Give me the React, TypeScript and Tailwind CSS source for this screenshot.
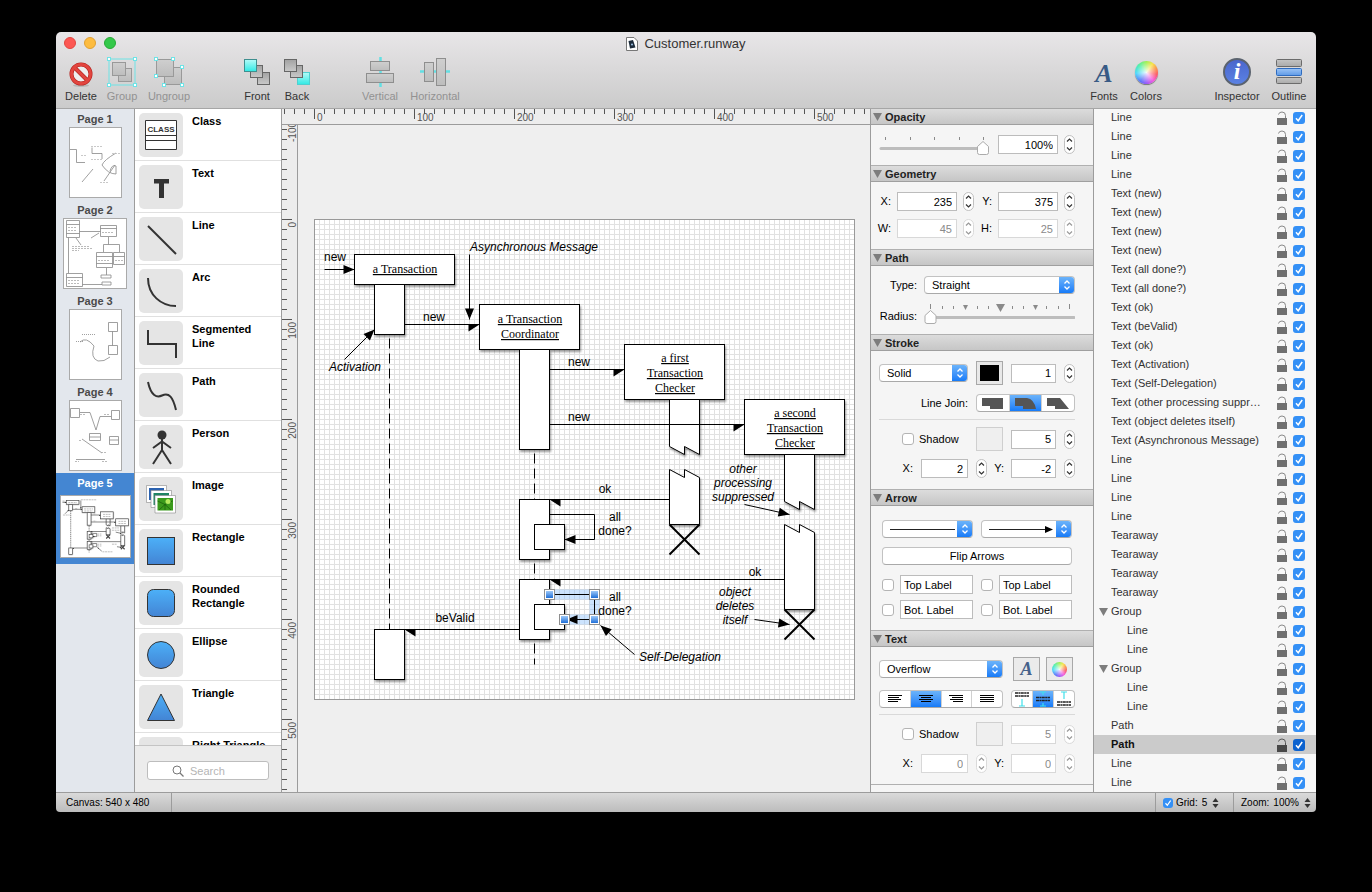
import type { ReactNode } from "react";
import clsx from "clsx";

/* ---------- diagram ---------- */

type Pt = { x: number; y: number };

function Arrow({ from, to, half }: { from: Pt; to: Pt; half?: boolean }) {
  const angle = (Math.atan2(to.y - from.y, to.x - from.x) * 180) / Math.PI;
  const side = to.x < from.x ? -7 : 7;
  return (
    <>
      <path d={`M${from.x} ${from.y}L${to.x} ${to.y}`} />
      <path
        d={half ? `M0 0H-11V${side}Z` : "M0 0L-11 -4.5V4.5Z"}
        fill="black"
        stroke="none"
        transform={`translate(${to.x} ${to.y}) rotate(${angle})`}
      />
    </>
  );
}

const boxes = [
  { x: 60, y: 65, w: 30, h: 50 },
  { x: 40, y: 35, w: 100, h: 30 },
  { x: 205, y: 130, w: 30, h: 100 },
  { x: 165, y: 85, w: 100, h: 45 },
  { x: 205, y: 280, w: 30, h: 60 },
  { x: 220, y: 305, w: 30, h: 25 },
  { x: 205, y: 360, w: 30, h: 60 },
  { x: 220, y: 385, w: 30, h: 25 },
  { x: 60, y: 410, w: 30, h: 50 },
  { x: 310, y: 125, w: 100, h: 55 },
  { x: 430, y: 180, w: 100, h: 55 },
];

const tearaways = [
  "M355 180V227L370 235V227L385 235V180Z",
  "M355 305V250L370 258V250L385 258V305Z",
  "M470 235V282L485 290V282L500 290V235Z",
  "M470 390V305L485 313V305L500 313V390Z",
];

const crosses = "M355 305L385 335M385 305L355 335M470 390L500 420M500 390L470 420";

type Label = { x: number; y: number; lines: string[]; kind?: "italic" | "serif" };

const diagramText: Label[] = [
  { x: 20, y: 42, lines: ["new"] },
  { x: 219, y: 32, lines: ["Asynchronous Message"], kind: "italic" },
  { x: 119, y: 102, lines: ["new"] },
  { x: 264, y: 147, lines: ["new"] },
  { x: 264, y: 202, lines: ["new"] },
  { x: 40, y: 152, lines: ["Activation"], kind: "italic" },
  { x: 290, y: 274, lines: ["ok"] },
  { x: 440, y: 357, lines: ["ok"] },
  { x: 300, y: 302, lines: ["all", "done?"] },
  { x: 300, y: 382, lines: ["all", "done?"] },
  { x: 140, y: 403, lines: ["beValid"] },
  { x: 428, y: 254, lines: ["other", "processing", "suppressed"], kind: "italic" },
  { x: 420, y: 377, lines: ["object", "deletes", "itself"], kind: "italic" },
  { x: 365, y: 442, lines: ["Self-Delegation"], kind: "italic" },
  { x: 90, y: 54, lines: ["a Transaction"], kind: "serif" },
  { x: 215, y: 104, lines: ["a Transaction", "Coordinator"], kind: "serif" },
  { x: 360, y: 143, lines: ["a first", "Transaction", "Checker"], kind: "serif" },
  { x: 480, y: 198, lines: ["a second", "Transaction", "Checker"], kind: "serif" },
];

function DiagramShapes() {
  return (
    <>
      <g strokeDasharray="10 5">
        <path d="M75 119V410" />
        <path d="M220 234V280M220 344V360M220 424V445" />
      </g>
      <g fill="white" filter="url(#drop)">
        {tearaways.map((d) => (
          <path key={d} d={d} />
        ))}
        {boxes.map((b) => (
          <rect key={`${b.x}-${b.y}`} x={b.x} y={b.y} width={b.w} height={b.h} />
        ))}
      </g>
      <Arrow from={{ x: 10, y: 50 }} to={{ x: 40, y: 50 }} />
      <Arrow from={{ x: 155, y: 35 }} to={{ x: 155, y: 100 }} />
      <Arrow from={{ x: 30, y: 140 }} to={{ x: 60, y: 110 }} />
      <Arrow from={{ x: 90, y: 105 }} to={{ x: 165, y: 105 }} half />
      <Arrow from={{ x: 235, y: 150 }} to={{ x: 310, y: 150 }} half />
      <Arrow from={{ x: 235, y: 205 }} to={{ x: 430, y: 205 }} half />
      <Arrow from={{ x: 355, y: 280 }} to={{ x: 235, y: 280 }} half />
      <Arrow from={{ x: 470, y: 360 }} to={{ x: 235, y: 360 }} half />
      <Arrow from={{ x: 205, y: 410 }} to={{ x: 90, y: 410 }} half />
      <path d="M235 295H280V320" />
      <Arrow from={{ x: 280, y: 320 }} to={{ x: 250, y: 320 }} />
      <Arrow from={{ x: 430, y: 285 }} to={{ x: 475, y: 295 }} />
      <Arrow from={{ x: 440, y: 400 }} to={{ x: 475, y: 405 }} />
      <Arrow from={{ x: 320, y: 435 }} to={{ x: 286, y: 406 }} />
    </>
  );
}

function Diagram() {
  return (
    <svg className="h-[481px] w-[541px] shrink-0" viewBox="0 0 541 481" role="img" aria-label="Sequence diagram">
      <defs>
        <pattern id="grid" width="5" height="5" patternUnits="userSpaceOnUse">
          <rect width="5" height="5" fill="white" />
          <rect width="1" height="5" fill="#e1e1e1" />
          <rect width="5" height="1" fill="#e1e1e1" />
        </pattern>
        <filter id="drop" x="-10%" y="-10%" width="120%" height="120%">
          <feDropShadow dx="1" dy="2" stdDeviation="1.2" floodOpacity="0.4" />
        </filter>
        <linearGradient id="handle" x2="0" y2="1">
          <stop offset="0" stopColor="#9cc8f8" />
          <stop offset="1" stopColor="#1f6fd8" />
        </linearGradient>
      </defs>
      <rect width="541" height="481" fill="url(#grid)" />
      <rect x="0.5" y="0.5" width="540" height="480" fill="none" stroke="#999" />
      <g transform="translate(0.5 0.5)" fill="none" stroke="black">
        <DiagramShapes />
        <path d={crosses} strokeWidth="2" />
        {/* selected path, with its halo and handles */}
        <path d="M235 375H280V400H250" stroke="#8ec2fb" strokeOpacity="0.45" strokeWidth="10" />
        <path d="M235 375H280V400" />
        <Arrow from={{ x: 280, y: 400 }} to={{ x: 252, y: 400 }} />
        {[
          [235, 375],
          [280, 375],
          [280, 400],
          [250, 400],
        ].map(([x, y]) => (
          <g key={`${x}-${y}`}>
            <rect x={x - 5} y={y - 5} width="10" height="10" fill="white" stroke="#8e8e8e" />
            <rect x={x - 3.5} y={y - 3.5} width="7" height="7" fill="url(#handle)" stroke="none" />
          </g>
        ))}
      </g>
      <g transform="translate(1 0)" textAnchor="middle">
        {diagramText.map((t) => (
          <text
            key={`${t.x}-${t.y}`}
            className={clsx(
              "text-[12px]",
              t.kind === "serif" && "font-['Liberation_Serif',serif] underline decoration-[#666]",
              t.kind === "italic" && "italic",
            )}
          >
            {t.lines.map((line, i) => (
              <tspan key={line} x={t.x} y={t.y + i * (t.kind === "serif" ? 15 : 14)}>
                {line}
              </tspan>
            ))}
          </text>
        ))}
      </g>
    </svg>
  );
}

/* ---------- rulers ---------- */

const ticks = Array.from({ length: 200 }, (_, i) => i - 12);

function RulerTop() {
  return (
    <svg className="h-4 w-full shrink-0 border-b border-[#9c9c9c] bg-[#ededed]" aria-hidden>
      {ticks.map((n) => (
        <rect key={n} x={32 + n * 10} y="0" width="1" height={n % 10 ? 5 : 10} fill="#555" />
      ))}
      {[0, 100, 200, 300, 400, 500].map((n) => (
        <text key={n} x={35 + n} y="12" className="fill-[#555] text-[10px]">
          {n}
        </text>
      ))}
    </svg>
  );
}

function RulerSide() {
  return (
    <svg className="h-full w-4 shrink-0 border-r border-[#9c9c9c] bg-[#ededed]" aria-hidden>
      {ticks.map((n) => (
        <rect key={n} x="0" y={94 + n * 10} width={n % 10 ? 5 : 10} height="1" fill="#555" />
      ))}
      {[-100, 0, 100, 200, 300, 400, 500].map((n) => (
        <text
          key={n}
          textAnchor="end"
          transform={`translate(14 ${97 + n}) rotate(-90)`}
          className="fill-[#555] text-[10px]"
        >
          {n}
        </text>
      ))}
    </svg>
  );
}

/* ---------- controls ---------- */

function Check({ id, label, checked, dark, small }: { id?: string; label?: string; checked?: boolean; dark?: boolean; small?: boolean }) {
  return (
    <span className="grid shrink-0">
      <input
        id={id}
        type="checkbox"
        defaultChecked={checked}
        aria-label={label}
        className={clsx(
          "peer col-start-1 row-start-1 appearance-none rounded-[3px] border border-[#b4b4b4] bg-white checked:border-transparent",
          small ? "size-[10px]" : "size-3",
          dark ? "checked:bg-[#0b62cf]" : "checked:bg-[#3490f6]",
        )}
      />
      <svg
        viewBox="0 0 12 12"
        className={clsx("pointer-events-none invisible col-start-1 row-start-1 peer-checked:visible", small ? "size-[10px]" : "size-3")}
      >
        <path d="M3 6.3L5.2 8.8L9.2 3" fill="none" stroke="white" strokeWidth="1.5" />
      </svg>
    </span>
  );
}

function NumField({ id, label, value, width, disabled }: { id?: string; label?: string; value: string; width: string; disabled?: boolean }) {
  return (
    <input
      id={id}
      aria-label={label}
      defaultValue={value}
      disabled={disabled}
      className={clsx(
        "h-[19px] border bg-white pr-1 text-right text-[11px] outline-none",
        width,
        disabled ? "border-[#d8d8d8] text-[#8a8a8a]" : "border-[#bcbcbc] text-black",
      )}
    />
  );
}

function Stepper({ label, disabled }: { label: string; disabled?: boolean }) {
  return (
    <span
      className={clsx(
        "flex h-[19px] w-[11px] shrink-0 flex-col rounded-full border bg-white",
        disabled ? "border-[#dadada] text-[#999]" : "border-[#c0c0c0] text-[#333]",
      )}
    >
      <button aria-label={`Increase ${label}`} disabled={disabled} className="flex flex-1 items-center justify-center">
        <svg viewBox="0 0 7 8" className="h-2 w-[7px]" fill="none" stroke="currentColor">
          <path d="M1 5.5L3.5 3L6 5.5" strokeWidth="1.2" />
        </svg>
      </button>
      <button aria-label={`Decrease ${label}`} disabled={disabled} className="flex flex-1 items-center justify-center">
        <svg viewBox="0 0 7 8" className="h-2 w-[7px]" fill="none" stroke="currentColor">
          <path d="M1 2.5L3.5 5L6 2.5" strokeWidth="1.2" />
        </svg>
      </button>
    </span>
  );
}

function Popup({ id, label, value, width, children }: { id?: string; label?: string; value: string; width: string; children?: ReactNode }) {
  return (
    <span className={clsx("grid h-[18px] shrink-0 overflow-hidden rounded-[4px] border border-[#c2c2c2] border-b-[#a9a9a9] bg-white", width)}>
      <select
        id={id}
        aria-label={label}
        className="col-start-1 row-start-1 w-full appearance-none bg-transparent pl-[7px] text-[11px] leading-4 outline-none"
      >
        {value ? <option>{value}</option> : <option aria-label={label} />}
      </select>
      {children && <span className="pointer-events-none col-start-1 row-start-1 flex items-center pl-[7px]">{children}</span>}
      <span className="pointer-events-none col-start-1 row-start-1 flex w-[15px] items-center justify-center justify-self-end bg-linear-to-b from-[#6bb3fa] to-[#147bf8]">
        <svg viewBox="0 0 8 12" className="h-3 w-2" fill="none" stroke="white" strokeWidth="1.3">
          <path d="M1.5 4.5L4 2L6.5 4.5M1.5 7.5L4 10L6.5 7.5" />
        </svg>
      </span>
    </span>
  );
}

function Well({ label, color }: { label: string; color?: string }) {
  return (
    <button
      aria-label={label}
      className={clsx("h-6 w-[27px] shrink-0 border p-[3px]", color ? "border-[#a8a8a8] bg-[#e8e8e8]" : "border-[#cfcfcf] bg-[#efefef]")}
    >
      {color && <span className={clsx("block h-full", color)} />}
    </button>
  );
}

function Segments({ width, items }: { width: string; items: { label: string; on?: boolean; icon: ReactNode }[] }) {
  return (
    <span className={clsx("flex h-[18px] shrink-0 divide-x divide-[#d0d0d0] overflow-hidden rounded-[4px] border border-[#c2c2c2] border-b-[#a9a9a9] bg-white", width)}>
      {items.map((it) => (
        <button
          key={it.label}
          aria-label={it.label}
          aria-pressed={!!it.on}
          className={clsx("flex flex-1 items-center justify-center", it.on && "bg-linear-to-b from-[#6bb3fa] to-[#147bf8]")}
        >
          {it.icon}
        </button>
      ))}
    </span>
  );
}

const SliderThumb = ({ x }: { x: number }) => (
  <path d={`M${x} 8.5L${x + 5.5} 13.5V19.5Q${x + 5.5} 21.5 ${x + 3.5} 21.5H${x - 3.5}Q${x - 5.5} 21.5 ${x - 5.5} 19.5V13.5Z`} fill="white" stroke="#ababab" />
);

function Section({ title, first, children, className }: { title: string; first?: boolean; children: ReactNode; className: string }) {
  return (
    <section>
      <h2
        className={clsx(
          "flex items-center gap-[3px] border-b border-[#9f9f9f] bg-linear-to-b from-[#dcdcdc] to-[#c6c6c6] pt-px pl-0.5 text-[11px] leading-[14px] font-bold text-[#222]",
          !first && "border-t border-t-[#b0b0b0]",
        )}
      >
        <svg viewBox="0 0 9 8" className="h-2 w-[9px]">
          <path d="M0 0H9L4.5 8Z" fill="#7d7d7d" />
        </svg>
        {title}
      </h2>
      <div className={clsx("flex flex-col", className)}>{children}</div>
    </section>
  );
}

function ShadowRows({ id, x, y, blur, disabled, gap }: { id: string; x: string; y: string; blur: string; disabled?: boolean; gap: string }) {
  return (
    <>
      <hr className={clsx("mb-[7px] border-[#d9d9d9]", gap)} />
      <div className="flex h-6 items-center">
        <span className="flex w-[97px] items-center gap-[5px] pl-[23px]">
          <Check id={`${id}-shadow`} />
          <label htmlFor={`${id}-shadow`}>Shadow</label>
        </span>
        <Well label="Shadow color" />
        <span className="flex flex-1 justify-between pl-2">
          <NumField label="Shadow blur" value={blur} width="w-[45px]" disabled={disabled} />
          <Stepper label="shadow blur" disabled={disabled} />
        </span>
      </div>
      <div className="mt-2 flex items-center">
        <label htmlFor={`${id}-x`} className="w-[42px] pr-2 text-right">
          X:
        </label>
        <NumField id={`${id}-x`} value={x} width="w-[47px] mr-2" disabled={disabled} />
        <Stepper label="shadow x" disabled={disabled} />
        <label htmlFor={`${id}-y`} className="w-6 pr-[7px] text-right">
          Y:
        </label>
        <NumField id={`${id}-y`} value={y} width="w-[45px] mr-2" disabled={disabled} />
        <Stepper label="shadow y" disabled={disabled} />
      </div>
    </>
  );
}

function ColorWheel({ className }: { className: string }) {
  return (
    <span
      className={clsx(
        "block rounded-full bg-[radial-gradient(circle,rgba(255,255,255,0.9),rgba(255,255,255,0)_65%),conic-gradient(#a4f056,#f9e34a_35deg,#fb9a4c_65deg,#fb5a64_100deg,#f45be0_140deg,#9b5cf8_180deg,#5b74fa_215deg,#4ed8fa_265deg,#4eefb0_310deg,#a4f056)]",
        className,
      )}
    />
  );
}

const alignIcon = (rows: [number, number][]) => (
  <svg viewBox="0 0 14 8" className="h-2 w-[14px]" stroke="black">
    {rows.map(([a, b], i) => (
      <path key={i} d={`M${a} ${i * 2 + 0.5}H${b}`} />
    ))}
  </svg>
);

const vAlignIcon = (textY: number, beam: string) => (
  <svg viewBox="0 0 16 16" className="size-4" fill="none">
    <path d={`M1 ${textY}H15M1 ${textY + 3}H15`} stroke="#222" strokeWidth="1.7" strokeDasharray="3 .4 2 .4" />
    <path d={beam} stroke="#3fe0ea" strokeWidth="1.2" />
  </svg>
);

const joinIcon = (d: string) => (
  <svg viewBox="0 0 22 11" className="h-[11px] w-[22px]">
    <path d={d} fill="#555" />
  </svg>
);

function Inspector() {
  return (
    <aside className="flex w-56 shrink-0 flex-col overflow-hidden border-x border-[#9c9c9c] bg-[#f5f5f5] text-[11px]">
      <Section title="Opacity" first className="pt-[10px] pr-[18px] pb-[11px] pl-2">
        <div className="flex h-[19px] items-center">
          <span className="relative mr-2 h-6 w-[111px]">
            <svg viewBox="0 0 111 24" className="h-6 w-[111px]">
              <path d="M6.5 4V7M31.5 4V7M55.5 4V7M80.5 4V7M104.5 4V7" stroke="#8a8a8a" />
              <path d="M2 15.5H105" stroke="#bdbdbd" strokeWidth="3" strokeLinecap="round" />
              <SliderThumb x={104} />
            </svg>
            <input type="range" aria-label="Opacity" defaultValue={100} className="absolute inset-0 w-full opacity-0" />
          </span>
          <NumField label="Opacity value" value="100%" width="w-[60px] mr-[6px]" />
          <Stepper label="opacity" />
        </div>
      </Section>

      <Section title="Geometry" className="gap-2 pt-[10px] pr-[18px] pb-[11px] pl-2">
        {[
          { a: "X", av: "235", b: "Y", bv: "375", off: false },
          { a: "W", av: "45", b: "H", bv: "25", off: true },
        ].map((r) => (
          <div key={r.a} className="flex items-center">
            <label htmlFor={`geo-${r.a}`} className="flex w-[18px] justify-end pr-[6px]">
              {r.a}:
            </label>
            <NumField id={`geo-${r.a}`} value={r.av} width="w-[60px] mr-[6px]" disabled={r.off} />
            <Stepper label={r.a} disabled={r.off} />
            <label htmlFor={`geo-${r.b}`} className="flex w-6 justify-end pr-[6px]">
              {r.b}:
            </label>
            <NumField id={`geo-${r.b}`} value={r.bv} width="w-[60px] mr-[6px]" disabled={r.off} />
            <Stepper label={r.b} disabled={r.off} />
          </div>
        ))}
      </Section>

      <Section title="Path" className="gap-2 pt-[10px] pr-[18px] pb-2 pl-2">
        <div className="flex items-center">
          <label htmlFor="path-type" className="flex-1 pr-[7px] text-right">
            Type:
          </label>
          <Popup id="path-type" value="Straight" width="w-[151px]" />
        </div>
        <div className="flex h-6 items-center">
          <label htmlFor="radius" className="flex-1 pt-[5px] pr-[7px] text-right">
            Radius:
          </label>
          <span className="relative h-6 w-[151px]">
            <svg viewBox="0 0 151 24" className="h-6 w-[151px]">
              <path
                d="M6.5 2V7M18.5 4V7M29.5 4V7M53.5 4V7M64.5 4V7M88.5 4V7M99.5 4V7M122.5 4V7M134.5 4V7M145.5 2V7"
                stroke="#8a8a8a"
              />
              <path d="M39 3H44L41.5 8ZM72 2H81L76.5 10ZM109 3H114L111.5 8Z" fill="#8a8a8a" />
              <path d="M3 15.5H150" stroke="#bdbdbd" strokeWidth="3" strokeLinecap="round" />
              <SliderThumb x={6.5} />
            </svg>
            <input id="radius" type="range" defaultValue={0} className="absolute inset-0 w-full opacity-0" />
          </span>
        </div>
      </Section>

      <Section title="Stroke" className="pt-[10px] pr-[18px] pb-[11px] pl-2">
        <div className="flex h-6 items-center">
          <Popup label="Stroke style" value="Solid" width="w-[89px] mr-2" />
          <Well label="Stroke color" color="bg-black" />
          <span className="flex flex-1 justify-between pl-2">
            <NumField label="Stroke width" value="1" width="w-[45px]" />
            <Stepper label="stroke width" />
          </span>
        </div>
        <div className="mt-[9px] flex items-center justify-end gap-2">
          Line Join:
          <Segments
            width="w-[99px]"
            items={[
              { label: "Miter join", icon: joinIcon("M0 0H21V11H8V8H0Z") },
              { label: "Round join", on: true, icon: joinIcon("M0 0H12Q19 1 21 11H8V8H0Z") },
              { label: "Bevel join", icon: joinIcon("M0 0H13L22 11H8V8H0Z") },
            ]}
          />
        </div>
        <ShadowRows id="stroke" x="2" y="-2" blur="5" gap="mt-[7px]" />
      </Section>

      <Section title="Arrow" className="pt-[14px] pr-[21px] pb-[11px] pl-[11px]">
        <div className="flex gap-2">
          <Popup label="Start arrow" value="" width="w-[91px]">
            <svg viewBox="0 0 66 8" className="h-2 w-[66px]">
              <path d="M0 4.5H65" stroke="#222" />
            </svg>
          </Popup>
          <Popup label="End arrow" value="" width="w-[91px]">
            <svg viewBox="0 0 66 8" className="h-2 w-[66px]">
              <path d="M0 4.5H60" stroke="#222" />
              <path d="M56 1L64 4.5L56 8Z" />
            </svg>
          </Popup>
        </div>
        <button className="mt-[9px] mb-[10px] h-[18px] rounded-[4px] border border-[#c2c2c2] border-b-[#a9a9a9] bg-white leading-4">
          Flip Arrows
        </button>
        <div className="grid grid-cols-[91px_91px] gap-x-2 gap-y-[6px]">
          {["Top Label", "Top Label", "Bot. Label", "Bot. Label"].map((t, i) => (
            <span key={i} className="flex items-center gap-[6px]">
              <Check label={`Show ${t}`} />
              <input aria-label={t} defaultValue={t} className="h-[19px] w-[73px] border border-[#bcbcbc] bg-white pl-[3px] outline-none" />
            </span>
          ))}
        </div>
      </Section>

      <Section title="Text" className="border-b border-[#b0b0b0] pt-[10px] pr-[18px] pb-[11px] pl-2">
        <div className="flex h-6 items-center">
          <Popup label="Text flow" value="Overflow" width="w-[124px] mr-[10px]" />
          <button
            aria-label="Text font"
            className="mr-[6px] flex h-6 w-[27px] items-center justify-center border border-[#a8a8a8] bg-[#ebebeb] font-['Liberation_Serif',serif] text-[18px] font-bold text-[#45618a] italic"
          >
            A
          </button>
          <button aria-label="Text color" className="flex h-6 w-[27px] items-center justify-center border border-[#a8a8a8] bg-[#ebebeb]">
            <ColorWheel className="size-[15px]" />
          </button>
        </div>
        <div className="mt-[9px] flex justify-between">
          <Segments
            width="w-[124px]"
            items={[
              { label: "Align left", icon: alignIcon([[0, 14], [0, 11], [0, 13], [0, 10]]) },
              { label: "Align center", on: true, icon: alignIcon([[0, 14], [2, 12], [0, 14], [2, 12]]) },
              { label: "Align right", icon: alignIcon([[0, 14], [3, 14], [1, 14], [4, 14]]) },
              { label: "Justify", icon: alignIcon([[0, 14], [0, 14], [0, 14], [0, 14]]) },
            ]}
          />
          <Segments
            width="w-16"
            items={[
              { label: "Align top", icon: vAlignIcon(2, "M5 15H11M8 15V8") },
              { label: "Align middle", on: true, icon: vAlignIcon(6.5, "M5 1H11M8 1V4M5 15H11M8 15V12") },
              { label: "Align bottom", icon: vAlignIcon(11, "M5 1H11M8 1V8") },
            ]}
          />
        </div>
        <ShadowRows id="text" x="0" y="0" blur="5" disabled gap="mt-[6px]" />
      </Section>
    </aside>
  );
}

/* ---------- outline ---------- */

type Row = { name: string; kind?: "group" | "child"; selected?: boolean };

const outline: Row[] = [
  ...["Line", "Line", "Line", "Line"].map((name) => ({ name })),
  ...["new", "new", "new", "new", "all done?", "all done?", "ok", "beValid", "ok", "Activation", "Self-Delegation"].map((t) => ({
    name: `Text (${t})`,
  })),
  { name: "Text (other processing suppressed)" },
  { name: "Text (object deletes itself)" },
  { name: "Text (Asynchronous Message)" },
  ...["Line", "Line", "Line", "Line"].map((name) => ({ name })),
  ...["Tearaway", "Tearaway", "Tearaway", "Tearaway"].map((name) => ({ name })),
  { name: "Group", kind: "group" },
  { name: "Line", kind: "child" },
  { name: "Line", kind: "child" },
  { name: "Group", kind: "group" },
  { name: "Line", kind: "child" },
  { name: "Line", kind: "child" },
  { name: "Path" },
  { name: "Path", selected: true },
  { name: "Line" },
  { name: "Line" },
];

function Outline() {
  return (
    <aside className="w-[222px] shrink-0 overflow-hidden bg-[#f7f7f7] text-[11px]">
      <ul className="-mt-px">
        {outline.map((r, i) => (
          <li key={i} className={clsx("flex h-[19px] items-center pr-[11px] pl-[5px]", r.selected ? "bg-[#cbcbcb] font-bold text-[#111]" : "text-[#333]")}>
            <span className={clsx("flex shrink-0 items-center", r.kind === "child" ? "w-7" : "w-3")}>
              {r.kind === "group" && (
                <svg viewBox="0 0 9 8" className="h-2 w-[9px]">
                  <path d="M0 0H9L4.5 8Z" fill="#7d7d7d" />
                </svg>
              )}
            </span>
            <span className="w-[152px] truncate">{r.name}</span>
            <button aria-label={`Lock ${r.name}`} className="mr-[6px] ml-auto shrink-0">
              <svg viewBox="0 0 10 14" className="h-[14px] w-[10px]" fill="none">
                <path d="M1.5 3.5Q2 1 5 1Q8.5 1 8.5 4.5V8" stroke={r.selected ? "#555" : "#888"} />
                <rect y="7" width="10" height="7" fill={r.selected ? "#484848" : "#707070"} />
              </svg>
            </button>
            <Check label={`Show ${r.name}`} checked dark={r.selected} />
          </li>
        ))}
      </ul>
    </aside>
  );
}

/* ---------- shape library ---------- */

const stroke = { fill: "none", stroke: "#333", strokeWidth: 2 };
const blue = { fill: "url(#blue)", stroke: "#333", strokeWidth: 1 };

const shapes: { name: string; icon: ReactNode }[] = [
  {
    name: "Class",
    icon: (
      <>
        <path d="M6.5 7.5H37.5V36.5H6.5ZM6.5 22.5H37.5M6.5 27.5H37.5" fill="white" stroke="#333" />
        <text x="22" y="19" textAnchor="middle" className="fill-[#333] text-[8px] font-bold">
          CLASS
        </text>
      </>
    ),
  },
  { name: "Text", icon: <path d="M15 14H30V18.5H25V33H20V18.5H15Z" fill="#333" /> },
  { name: "Line", icon: <path d="M9 9L37 37" {...stroke} /> },
  { name: "Arc", icon: <path d="M9 9C9 26 22 37 37 37" {...stroke} /> },
  { name: "Segmented Line", icon: <path d="M9 9V23H37V37" {...stroke} /> },
  { name: "Path", icon: <path d="M9 9C12 23 18 25 23 22.5C30 19 34 24 37 37" {...stroke} /> },
  {
    name: "Person",
    icon: (
      <>
        <circle cx="23" cy="10" r="4.5" fill="#333" />
        <path d="M23 14V25L14 39M23 25L32 39M14 23L23 16.5L32 23" {...stroke} />
      </>
    ),
  },
  {
    name: "Image",
    icon: (
      <g stroke="#888" strokeWidth=".6">
        <path d="M7.5 8.5H27.5V25.5H7.5Z" fill="white" />
        <path d="M10 11H25V23H10Z" fill="#2b62b0" stroke="none" />
        <path d="M12 13.5H32.5V30.5H12Z" fill="white" />
        <path d="M14.5 16H30V28H14.5Z" fill="#1f8462" stroke="none" />
        <path d="M16 18.5H36.5V36H16Z" fill="white" />
        <path d="M18.5 21H34V33.5H18.5Z" fill="#3b9a1c" stroke="none" />
        <path d="M18.5 24L26 27.5L20 33M26 27.5L33.5 24M26 27.5L32 33M26 27.5V33" fill="none" stroke="#135208" />
        <circle cx="29" cy="24.5" r="2.5" fill="#b4ec5e" stroke="none" />
      </g>
    ),
  },
  { name: "Rectangle", icon: <rect x="8.5" y="8.5" width="27" height="27" {...blue} /> },
  { name: "Rounded Rectangle", icon: <rect x="8.5" y="8.5" width="27" height="27" rx="6" {...blue} /> },
  { name: "Ellipse", icon: <circle cx="22" cy="22" r="13.5" {...blue} /> },
  { name: "Triangle", icon: <path d="M22 9L35.5 35.5H8.5Z" {...blue} /> },
  { name: "Right Triangle", icon: <path d="M8.5 8.5V35.5H35.5Z" {...blue} /> },
];

function ShapeLibrary() {
  return (
    <div className="flex w-[147px] shrink-0 flex-col border-r border-[#9c9c9c] bg-white">
      <ul className="min-h-0 flex-1 overflow-hidden">
        {shapes.map((s) => (
          <li key={s.name} className="flex h-[52px] gap-[9px] border-b border-[#e0e0e0] pt-1 pl-1">
            <svg viewBox="0 0 44 44" className="size-11 shrink-0 rounded-[5px] bg-[#e5e5e5]">
              {s.icon}
            </svg>
            <span className="w-20 pt-px text-[11px] leading-[14px] font-bold">{s.name}</span>
          </li>
        ))}
      </ul>
      <div className="border-t border-[#c4c4c4] bg-[#ececec] px-3 pt-[15px] pb-3">
        <label className="flex h-[19px] items-center gap-[6px] rounded-[3px] border border-[#bdbdbd] bg-white pl-6">
          <svg viewBox="0 0 12 12" className="size-3 shrink-0" fill="none" stroke="#777">
            <circle cx="5" cy="5" r="4" />
            <path d="M8 8L11.5 11.5" strokeWidth="1.2" />
          </svg>
          <input type="search" aria-label="Search" placeholder="Search" className="w-full min-w-0 pt-px text-[11px] outline-none placeholder:text-[#b5b5b5]" />
        </label>
      </div>
    </div>
  );
}

/* ---------- page list ---------- */

const pages: { name: string; size: string; box: string; art: ReactNode }[] = [
  {
    name: "Page 1",
    size: "h-[71px] w-[53px]",
    box: "0 0 51 69",
    art: (
      <>
        <path d="M0 21.5H6.5V34.5H15M22 19.5V25.5H32V31M12 54L23 41M34 53L45 37M46 25Q34 32 32 37Q38 46 46 46V38Q42 36 40 43" />
        <path d="M21 18.5H32M21 31.5H32M11 27.5H16M42 25.5H50M30 54.5H39" strokeDasharray="2 1" stroke="#bbb" />
      </>
    ),
  },
  {
    name: "Page 2",
    size: "h-[71px] w-16",
    box: "0 0 62 69",
    art: (
      <>
        <path d="M2.5 1.5H15.5V18.5H2.5ZM2.5 5.5H15.5M2.5 14.5H15.5M36.5 6.5H52.5V17.5H36.5ZM36.5 9.5H52.5M32.5 33.5H48.5V48.5H32.5ZM32.5 37.5H48.5M32.5 44.5H48.5M49.5 33.5H60.5V45.5H49.5ZM49.5 37.5H60.5M2.5 54.5H18.5V67.5H2.5ZM2.5 58.5H18.5M37 56H47V59H37ZM38 63H47V66H38Z" />
        <path d="M15.5 12.5H36.5M44.5 18V25.5M39.5 33V25.5H55.5V33M42.5 49V56M18.5 65.5H38M4.5 18.5V54M12 19L17 26M35 14L27 19" />
        <path d="M8 27.5H26M8 29.5H28M8 31.5H15M4 8.5H13M4 11.5H13M38 13.5H50M34 41.5H46M51 41.5H59M4 61.5H15M4 64.5H15" strokeDasharray="2 1" stroke="#aaa" />
      </>
    ),
  },
  {
    name: "Page 3",
    size: "h-[71px] w-[53px]",
    box: "0 0 51 69",
    art: (
      <>
        <path d="M38.5 12.5H47.5V21.5H38.5ZM38.5 35.5H47.5V44.5H38.5ZM42.5 21.5V35.5M10 32Q16 26 24 36Q20 48 28 51Q34 52 40 47" />
        <path d="M12 24.5H26M6 31.5H13" strokeDasharray="1 1" />
      </>
    ),
  },
  {
    name: "Page 4",
    size: "h-[71px] w-[53px]",
    box: "0 0 51 69",
    art: (
      <>
        <path d="M.5 7.5H9.5V16.5H.5ZM41.5 9.5H49.5V18.5H41.5ZM10 11.5H20L26 29L30 15.5H41M19.5 32.5H30.5V39.5H19.5ZM19.5 36H30.5M39.5 35.5H48.5V43.5H39.5ZM39.5 39H48.5M12 38L32 52M6 58.5H35" />
        <path d="M10 13.5H16M34 13.5H40M9 39.5H12M31 51.5H36M5 60.5H9M32 60.5H38" strokeDasharray="2 1" stroke="#aaa" />
      </>
    ),
  },
  {
    name: "Page 5",
    size: "h-[63px] w-[71px]",
    box: "0 0 541 481",
    art: (
      <g stroke="#444" strokeWidth="5">
        <DiagramShapes />
        <path d={crosses} strokeWidth="9" />
        <path d="M235 375H280V400H250" />
        {/* captions are too small to read here, so they are only dashes */}
        <path
          d="M155 30H280M10 40H30M14 150H66M110 100H130M254 142H276M254 198H276M285 300H317M285 314H317M285 380H317M285 394H317M325 440H405M400 252H455M400 270H460M400 380H440M56 52H124M180 102H250M182 118H248M330 145H390M330 162H390M452 200H510M452 217H510"
          strokeDasharray="16 5"
          stroke="#999"
        />
      </g>
    ),
  },
];

function PageList() {
  return (
    <nav className="w-[79px] shrink-0 overflow-hidden border-r border-[#9c9c9c] bg-[#e3e7ed]">
      {pages.map((p) => {
        const on = p.name === "Page 5";
        return (
          <button key={p.name} aria-pressed={on} className={clsx("flex h-[91px] w-full flex-col items-center", on && "bg-[#4486d2]")}>
            <span className={clsx("pt-0.5 text-[11px] leading-4 font-bold", on ? "text-white" : "text-[#4a4a4a]")}>{p.name}</span>
            <span className="flex h-[71px] items-center">
              <svg viewBox={p.box} className={clsx("border border-[#aaa] bg-white", p.size)} fill="none" stroke="#888" strokeWidth="0.8">
                {p.art}
              </svg>
            </span>
          </button>
        );
      })}
    </nav>
  );
}

/* ---------- toolbar ---------- */

function Tool({ label, width, disabled, children }: { label: string; width: string; disabled?: boolean; children: ReactNode }) {
  return (
    <button disabled={disabled} className={clsx("flex shrink-0 flex-col items-center", width)}>
      <span className="flex h-9 items-center justify-center">{children}</span>
      <span className={clsx("text-[11px] leading-[13px]", disabled ? "text-[#929292]" : "text-[#333]")}>{label}</span>
    </button>
  );
}

const Node = ({ x, y }: { x: number; y: number }) => <rect x={x - 1.5} y={y - 1.5} width="3" height="3" fill="white" stroke="#6fe3e6" />;

function Toolbar() {
  return (
    <header className="rounded-t-[5px] border-b border-[#a6a6a6] bg-linear-to-b from-[#e8e6e8] to-[#cbcbcb]">
      <div className="grid h-[22px] grid-cols-[1fr_auto_1fr] items-center">
        <div className="flex gap-2 pl-2">
          <button aria-label="Close" className="size-3 rounded-full border border-[#e2463f] bg-[#fc5753]" />
          <button aria-label="Minimize" className="size-3 rounded-full border border-[#e0a032] bg-[#fdbc40]" />
          <button aria-label="Zoom" className="size-3 rounded-full border border-[#27aa35] bg-[#34c84a]" />
        </div>
        <h1 className="flex items-center gap-[6px] pt-px text-[13px] leading-5 text-[#333]">
          <svg viewBox="0 0 12 14" className="h-[14px] w-3">
            <path d="M.5 .5H8L11.5 4V13.5H.5Z" fill="white" stroke="#777" />
            <path d="M2.5 4L7 3L9.5 10.5L4 11.5Z" fill="#1d2c3c" />
            <circle cx="6" cy="7.5" r="1" fill="#9fc4e8" />
          </svg>
          Customer.runway
        </h1>
      </div>
      <div className="flex h-[54px] justify-between pr-[6px] pl-[5px]">
        <div className="flex">
          <Tool label="Delete" width="w-10">
            <svg viewBox="0 -3 24 29" className="h-[29px] w-6">
              <ellipse cx="12" cy="24.5" rx="8" ry="1.5" fill="#999" opacity=".5" />
              <circle cx="12" cy="13" r="9.5" fill="#eee" stroke="#b3201c" strokeWidth="4" />
              <path d="M5.5 6.5L18.5 19.5" stroke="#b3201c" strokeWidth="4" />
              <circle cx="12" cy="13" r="9.5" fill="none" stroke="#e2453f" strokeWidth="2.8" />
              <path d="M5.5 6.5L18.5 19.5" stroke="#e2453f" strokeWidth="2.8" />
            </svg>
          </Tool>
          <Tool label="Group" width="w-[42px]" disabled>
            <svg viewBox="0 0 30 30" className="size-[30px]">
              <rect x="2" y="2" width="26" height="26" fill="none" stroke="#6fe3e6" />
              <rect x="11.5" y="11.5" width="13" height="13" fill="url(#pale)" stroke="#999" />
              <rect x="5.5" y="5.5" width="13" height="13" fill="url(#pale)" stroke="#999" />
              <Node x={2} y={2} />
              <Node x={28} y={2} />
              <Node x={2} y={28} />
              <Node x={28} y={28} />
            </svg>
          </Tool>
          <Tool label="Ungroup" width="w-[52px]" disabled>
            <svg viewBox="0 0 30 30" className="size-[30px]">
              <rect x="10.5" y="10.5" width="17" height="17" fill="url(#pale)" stroke="#999" />
              <rect x="2.5" y="2.5" width="17" height="17" fill="url(#pale)" stroke="#999" />
              <Node x={2} y={2} />
              <Node x={19} y={2} />
              <Node x={2} y={19} />
              <Node x={28} y={10} />
              <Node x={10} y={28} />
              <Node x={28} y={28} />
            </svg>
          </Tool>
          <span className="w-[42px]" />
          <Tool label="Front" width="w-10">
            <svg viewBox="0 0 28 28" className="size-7">
              <rect x="14.5" y="14.5" width="12" height="12" fill="url(#gray)" stroke="#666" />
              <rect x="7.5" y="7.5" width="12" height="12" fill="url(#gray)" stroke="#666" />
              <rect x="1.5" y="1.5" width="12" height="12" fill="url(#cyan)" stroke="#3f8f8f" />
            </svg>
          </Tool>
          <Tool label="Back" width="w-10">
            <svg viewBox="0 0 28 28" className="size-7">
              <rect x="14.5" y="14.5" width="12" height="12" fill="url(#cyan)" stroke="#4fd0d0" />
              <rect x="7.5" y="7.5" width="12" height="12" fill="url(#gray)" stroke="#666" />
              <rect x="1.5" y="1.5" width="12" height="12" fill="url(#gray)" stroke="#666" />
            </svg>
          </Tool>
          <span className="w-[38px]" />
          <Tool label="Vertical" width="w-[50px]" disabled>
            <svg viewBox="0 0 30 30" className="size-[30px]">
              <path d="M15.5 0V30" stroke="#62dfe3" strokeWidth="2.5" />
              <rect x="5.5" y="4.5" width="19" height="9" fill="url(#pale)" stroke="#8e8e8e" />
              <rect x="1.5" y="16.5" width="27" height="9" fill="url(#pale)" stroke="#8e8e8e" />
            </svg>
          </Tool>
          <Tool label="Horizontal" width="w-[60px]" disabled>
            <svg viewBox="0 0 30 30" className="size-[30px]">
              <path d="M0 14.5H30" stroke="#62dfe3" strokeWidth="2.5" />
              <rect x="4.5" y="5.5" width="9" height="19" fill="url(#pale)" stroke="#8e8e8e" />
              <rect x="16.5" y="1.5" width="9" height="27" fill="url(#pale)" stroke="#8e8e8e" />
            </svg>
          </Tool>
        </div>
        <div className="flex">
          <Tool label="Fonts" width="w-10">
            <span aria-hidden className="pt-1 font-['Liberation_Serif',serif] text-[26px] leading-8 font-bold text-[#385a85] italic">
              A
            </span>
          </Tool>
          <Tool label="Colors" width="w-11">
            <ColorWheel className="size-[23px] shadow-[0_1px_1px_#777]" />
          </Tool>
          <span className="w-[38px]" />
          <Tool label="Inspector" width="w-[62px]">
            <span
              aria-hidden
              className="block size-7 rounded-full border-2 border-[#5b636f] bg-linear-to-b from-[#4a66cc] to-[#5b82e4] text-center font-['Liberation_Serif',serif] text-[24px] leading-[22px] font-bold text-white italic"
            >
              i
            </span>
          </Tool>
          <Tool label="Outline" width="w-[42px]">
            <svg viewBox="0 0 26 28" className="h-7 w-[26px]">
              <rect x=".5" y="1.5" width="25" height="7" rx="1" fill="url(#gray2)" stroke="#6b6b6b" />
              <rect x=".5" y="10.5" width="25" height="7" rx="1" fill="url(#bar)" stroke="#2f6cc0" />
              <rect x=".5" y="19.5" width="25" height="6" rx="1" fill="url(#gray2)" stroke="#6b6b6b" />
            </svg>
          </Tool>
        </div>
      </div>
    </header>
  );
}

const gradients = [
  { id: "blue", from: "#4cb0f8", to: "#4384d4" },
  { id: "gray", from: "#a2a2a2", to: "#c9c9c9" },
  { id: "gray2", from: "#c4c4c4", to: "#aaaaaa" },
  { id: "cyan", from: "#b4fbf8", to: "#2fe9e4" },
  { id: "pale", from: "#cfcfcf", to: "#bdbdbd" },
  { id: "bar", from: "#9cc4f5", to: "#5f9ae6" },
];

/* ---------- status bar ---------- */

const UpDown = () => (
  <svg viewBox="0 0 7 10" className="h-[10px] w-[7px] shrink-0">
    <path d="M3.5 0L6.5 4H.5ZM3.5 10L.5 6H6.5Z" fill="#333" />
  </svg>
);

function StatusBar() {
  return (
    <footer className="flex h-5 shrink-0 justify-between rounded-b-[4px] border-t border-[#9c9c9c] bg-linear-to-b from-[#dadada] to-[#bcbcbc] text-[10px]">
      <span className="flex w-[116px] items-center border-r border-[#9c9c9c] pl-[10px]">Canvas: 540 x 480</span>
      <div className="flex">
        <span className="flex w-[79px] items-center border-x border-[#9c9c9c] pl-[7px]">
          <Check id="grid-on" checked small />
          <label htmlFor="grid-on" className="ml-[3px]">
            Grid:
          </label>
          <select aria-label="Grid size" className="ml-1 w-[10px] appearance-none">
            <option>5</option>
          </select>
          <UpDown />
        </span>
        <span className="flex w-[82px] items-center pl-[7px]">
          <label htmlFor="zoom">Zoom:</label>
          <select id="zoom" className="mr-[3px] ml-1 w-7 appearance-none">
            <option>100%</option>
          </select>
          <UpDown />
        </span>
      </div>
    </footer>
  );
}

export default function App() {
  return (
    <div className="h-screen bg-black px-14 pt-8 pb-20 font-['Liberation_Sans',Arial,sans-serif] text-black">
      <svg className="absolute size-0" aria-hidden>
        <defs>
          {gradients.map((g) => (
            <linearGradient key={g.id} id={g.id} x2="0" y2="1">
              <stop offset="0" stopColor={g.from} />
              <stop offset="1" stopColor={g.to} />
            </linearGradient>
          ))}
        </defs>
      </svg>
      <div className="flex h-full flex-col">
        <Toolbar />
        <main className="flex min-h-0 flex-1">
          <PageList />
          <ShapeLibrary />
          <div className="flex min-w-0 flex-1 flex-col overflow-hidden bg-[#efefef]">
            <RulerTop />
            <div className="flex min-h-0 flex-1">
              <RulerSide />
              <div className="min-w-0 flex-1 overflow-hidden pt-[94px] pl-4">
                <Diagram />
              </div>
            </div>
          </div>
          <Inspector />
          <Outline />
        </main>
        <StatusBar />
      </div>
    </div>
  );
}
